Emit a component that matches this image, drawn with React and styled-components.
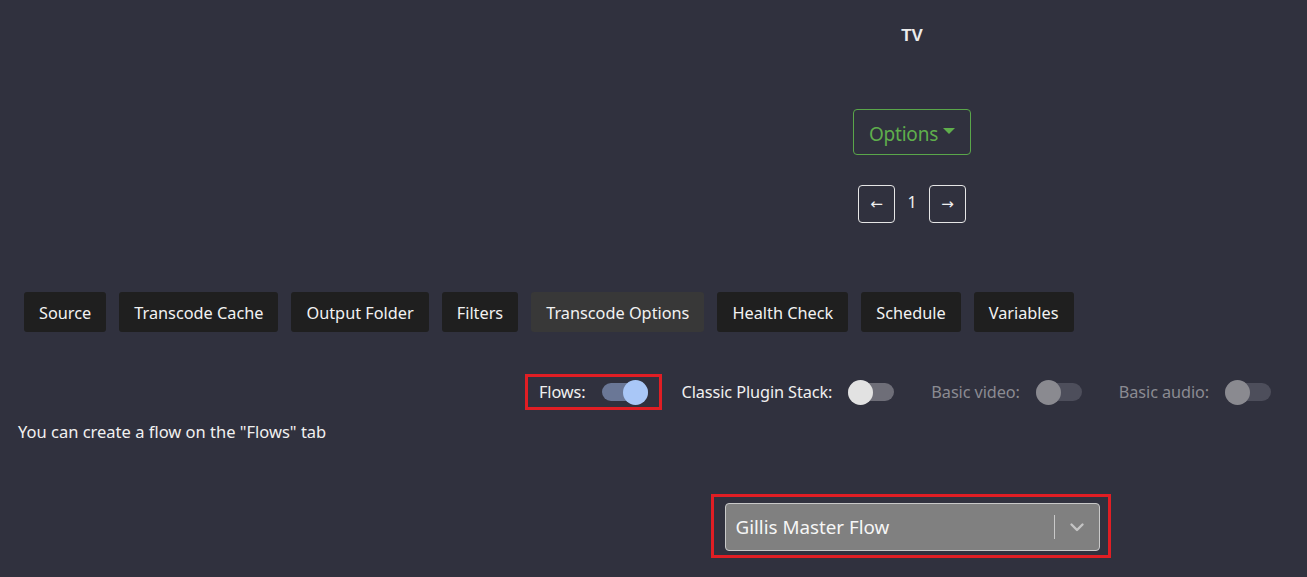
import React from 'react';
import styled, { createGlobalStyle } from 'styled-components';

const tabs = [
  'Source',
  'Transcode Cache',
  'Output Folder',
  'Filters',
  'Transcode Options',
  'Health Check',
  'Schedule',
  'Variables',
];

const toggles = [
  { label: 'Flows:', on: true, highlight: true },
  { label: 'Classic Plugin Stack:', on: false },
  { label: 'Basic video:', on: false, disabled: true },
  { label: 'Basic audio:', on: false, disabled: true },
];

const App = () => {
  return (
    <Page>
      <GlobalStyle />
      <Header>
        <div />
        <HeaderColumn>
          <Title>TV</Title>
          <OptionsButton>
            Options <Caret />
          </OptionsButton>
          <Pager>
            <PageButton>←</PageButton>
            <PageNumber>1</PageNumber>
            <PageButton>→</PageButton>
          </Pager>
        </HeaderColumn>
      </Header>

      <TabBar>
        {tabs.map((t) => (
          <Tab key={t} $active={t === 'Transcode Options'}>
            {t}
          </Tab>
        ))}
      </TabBar>

      <ToggleRow>
        {toggles.map((t) => (
          <ToggleGroup key={t.label} $highlight={t.highlight}>
            <ToggleLabel $disabled={t.disabled}>{t.label}</ToggleLabel>
            <Track $on={t.on} $disabled={t.disabled}>
              <Knob $on={t.on} $disabled={t.disabled} />
            </Track>
          </ToggleGroup>
        ))}
      </ToggleRow>

      <Hint>You can create a flow on the "Flows" tab</Hint>

      <SelectArea>
        <div />
        <SelectCell>
          <Highlight>
            <Select>
              <SelectValue>Gillis Master Flow</SelectValue>
              <Separator />
              <Chevron viewBox="0 0 20 20">
                <path
                  d="M4.5 7.5 L10 13 L15.5 7.5"
                  fill="none"
                  stroke="#c4c4c4"
                  strokeWidth="2.4"
                  strokeLinecap="round"
                  strokeLinejoin="round"
                />
              </Chevron>
            </Select>
          </Highlight>
        </SelectCell>
      </SelectArea>
    </Page>
  );
};

//Styles:
const GlobalStyle = createGlobalStyle`
  html, body {
    margin: 0;
    padding: 0;
    background: #30313e;
  }
  body {
    font-family: 'Noto Sans', sans-serif;
    color: #f0f0f0;
  }
  * {
    box-sizing: border-box;
  }
`;

const Page = styled.div`
  width: 1307px;
  height: 577px;
  overflow: hidden;
  background: #30313e;
`;

const Header = styled.div`
  display: grid;
  grid-template-columns: 517px 1fr;
  padding-top: 25px;
`;

const HeaderColumn = styled.div`
  display: flex;
  flex-direction: column;
  align-items: center;
`;

const Title = styled.div`
  font-family: 'Liberation Sans', Arial, sans-serif;
  font-weight: bold;
  font-size: 17px;
  line-height: 22px;
  color: #ececec;
`;

const OptionsButton = styled.button`
  margin-top: 62px;
  width: 118px;
  height: 46px;
  border: 1px solid #5aa64a;
  border-radius: 4px;
  background: transparent;
  color: #5fae4c;
  font-family: 'Noto Sans', sans-serif;
  font-size: 19px;
  letter-spacing: -0.2px;
  display: flex;
  align-items: center;
  justify-content: center;
  gap: 5px;
  padding: 3px 0 0;
`;

const Caret = styled.span`
  display: inline-block;
  width: 0;
  height: 0;
  border-left: 6px solid transparent;
  border-right: 6px solid transparent;
  border-top: 6px solid #5fae4c;
  margin-top: -6px;
`;

const Pager = styled.div`
  margin-top: 30px;
  display: flex;
  align-items: center;
`;

const PageButton = styled.button`
  width: 37px;
  height: 38px;
  border: 1px solid #e6e6e6;
  border-radius: 4px;
  background: transparent;
  color: #f0f0f0;
  font-family: 'DejaVu Sans', sans-serif;
  font-size: 15px;
  padding: 0;
  display: flex;
  align-items: center;
  justify-content: center;
`;

const PageNumber = styled.span`
  width: 34px;
  text-align: center;
  font-family: 'Noto Sans', sans-serif;
  font-size: 16px;
  margin-top: -4px;
`;

const TabBar = styled.div`
  display: flex;
  gap: 13px;
  padding: 69px 0 0 24px;
`;

const Tab = styled.div`
  height: 40px;
  padding: 1px 15px 0;
  display: flex;
  align-items: center;
  border-radius: 3px;
  background: ${(p) => (p.$active ? '#383838' : '#1f1f1f')};
  color: #f2f2f2;
  font-family: 'Noto Sans', sans-serif;
  font-size: 16.3px;
`;

const ToggleRow = styled.div`
  display: flex;
  justify-content: flex-end;
  align-items: center;
  padding: 42px 36px 0 0;
`;

const ToggleGroup = styled.div`
  display: flex;
  align-items: center;
  gap: 16px;
  height: 36px;
  margin-left: ${(p) => (p.$highlight ? '0' : '37px')};
  padding: ${(p) => (p.$highlight ? '0 11px 0 11px' : '0')};
  border: ${(p) => (p.$highlight ? '3px solid #e01e24' : 'none')};
  margin-right: ${(p) => (p.$highlight ? '-17px' : '0')};
`;

const ToggleLabel = styled.span`
  font-family: 'Noto Sans', sans-serif;
  font-size: 16.3px;
  letter-spacing: -0.1px;
  color: ${(p) => (p.$disabled ? '#8b8b92' : '#f0f0f0')};
`;

const Track = styled.div`
  position: relative;
  width: 46px;
  height: 18px;
  border-radius: 9px;
  background: ${(p) =>
    p.$on ? '#6a7796' : p.$disabled ? '#4d4e5b' : '#6e6e78'};
`;

const Knob = styled.div`
  position: absolute;
  top: -3.5px;
  left: ${(p) => (p.$on ? '21px' : '0')};
  width: 25px;
  height: 25px;
  border-radius: 50%;
  background: ${(p) =>
    p.$on ? '#a9c7f7' : p.$disabled ? '#8a8a90' : '#e2e2e2'};
`;

const Hint = styled.div`
  padding: 10px 0 0 18px;
  font-family: 'Noto Sans', sans-serif;
  font-size: 16.5px;
  color: #f0f0f0;
`;

const SelectArea = styled.div`
  display: grid;
  grid-template-columns: 517px 1fr;
  padding-top: 51px;
`;

const SelectCell = styled.div`
  display: flex;
  justify-content: center;
`;

const Highlight = styled.div`
  margin-left: -3px;
  padding: 6px 8px 4px 11px;
  border: 3px solid #e01e24;
`;

const Select = styled.div`
  width: 375px;
  height: 48px;
  display: flex;
  align-items: center;
  background: #808080;
  border: 1px solid #c9c9c9;
  border-radius: 4px;
  padding-left: 10px;
`;

const SelectValue = styled.span`
  flex: 1;
  font-family: 'Noto Sans', sans-serif;
  font-size: 18.8px;
  color: #f6f6f6;
`;

const Separator = styled.span`
  width: 1px;
  height: 24px;
  background: #c9c9c9;
`;

const Chevron = styled.svg`
  width: 20px;
  height: 20px;
  margin: 0 12px 0 12px;
`;

export default App;
